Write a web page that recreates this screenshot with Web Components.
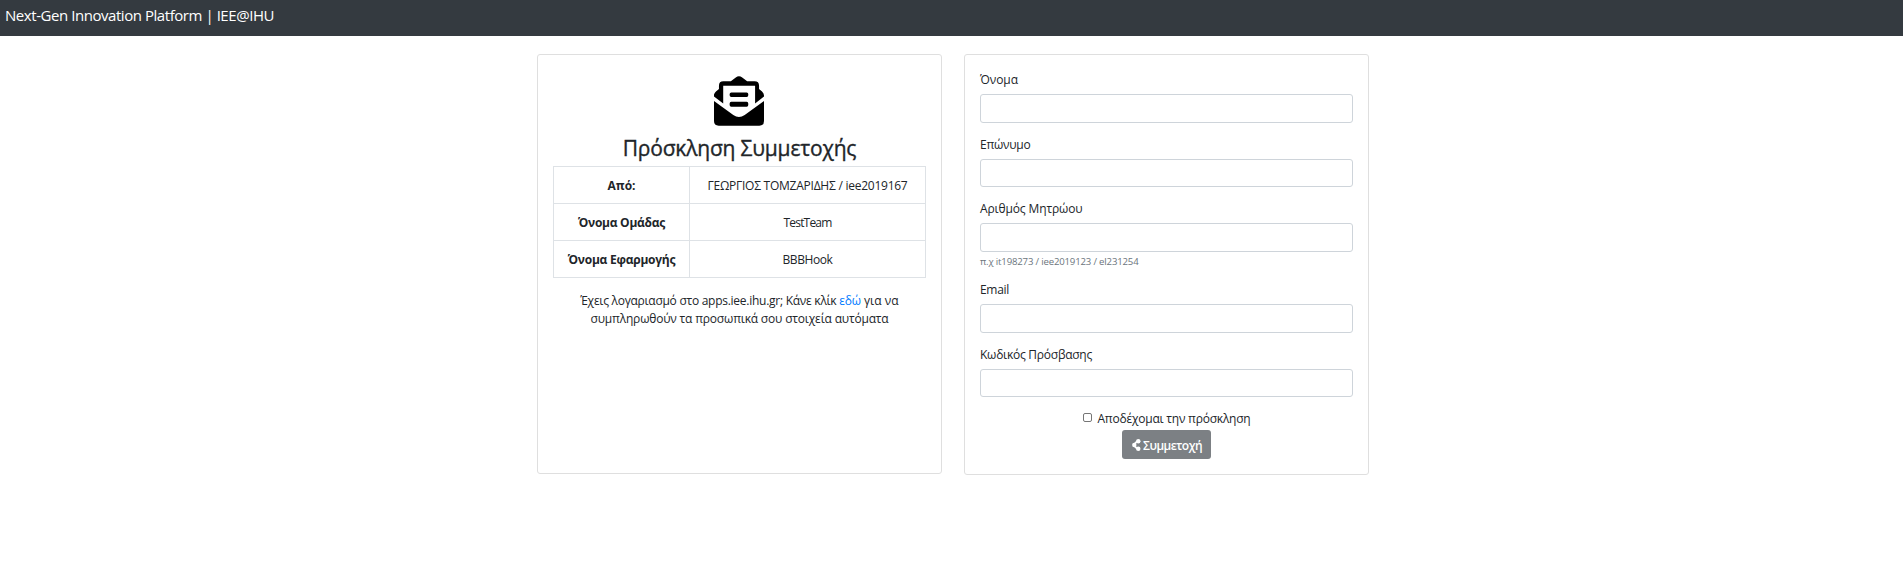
<!DOCTYPE html>
<html lang="el">
<head>
<meta charset="utf-8">
<title>Next-Gen Innovation Platform</title>
<style>
html{font-size:12px}
body{margin:0;background:#fff;color:#212529;font:400 12px/18px "Open Sans","Noto Sans",sans-serif}
</style>
</head>
<body>
<invite-page></invite-page>
<script>
const define = (name, html, setup) => customElements.define(name, class extends HTMLElement {
  connectedCallback() {
    if (!this.shadowRoot) {
      const t = document.createElement('template');
      t.innerHTML = html;
      this.attachShadow({mode: 'open'}).append(t.content.cloneNode(true));
    }
    if (setup) setup(this, this.shadowRoot);
  }
});

// Text run tracked to a given advance width
define('fit-text', `<style>:host{display:inline-block;white-space:pre}</style><slot></slot>`, el => {
  const w = parseFloat(el.getAttribute('w'));
  el.style.letterSpacing = '0px';
  const n = el.textContent.length;
  el.style.letterSpacing = ((w - el.getBoundingClientRect().width) / n).toFixed(4) + 'px';
});

define('nav-bar', `<style>
:host{display:flex;box-sizing:border-box;height:36px;padding:4px 5px;background:#343a40;color:#fff;font-size:15px;line-height:22px}
</style><slot></slot>`);

define('ui-card', `<style>
:host{display:block;box-sizing:border-box;width:405px;padding:15px;background:#fff;border:1px solid #dfdfdf;border-radius:3px}
</style><slot></slot>`);

define('mail-icon', `<style>:host{display:block;width:51px;height:50px}svg{display:block}</style>
<svg width="50" height="50" viewBox="0 0 50.500 50">
<path d="M0 18.500Q.5 17 2 15.500L5 13V9.500Q5 5 9.500 5H17L22 1.200Q25.200-1.200 28.500 1.200L33.500 5H41Q45.500 5 45.500 9.500V13L48.500 15.500Q50.500 17.300 50.500 19.500V20.500L41.500 27.500V9.500H9.300V27.500L0 20.500Z"/>
<path d="M0 25L19.500 39.200Q25.200 43 31 39.200L50.500 25V45.300Q50.500 50 45.800 50H4.700Q0 50 0 45.300Z"/>
<path d="M17.500 16.300H33Q34.600 16.300 34.600 18V19.200Q34.600 20.900 33 20.900H17.500Q15.800 20.900 15.800 19.200V18Q15.800 16.300 17.500 16.300ZM17.500 25.800H33Q34.600 25.800 34.600 27.500V29Q34.600 30.700 33 30.700H17.500Q15.800 30.700 15.800 29V27.500Q15.800 25.800 17.500 25.800Z"/>
</svg>`);

define('invite-table', `<style>
:host{display:grid;grid-template-columns:136px 236px;grid-auto-rows:37px;width:372px;border-bottom:1px solid #dee2e6;border-right:1px solid #dee2e6}
::slotted(*){box-sizing:border-box;border-top:1px solid #dee2e6;border-left:1px solid #dee2e6;padding:10px 0 7px;text-align:center}
::slotted(b){font-weight:700}
</style><slot></slot>`);

define('form-field', `<style>
:host{display:block;margin-bottom:12px}
label{display:block;box-sizing:border-box;padding-top:1px;margin-bottom:6px;height:18px}
input{display:block;box-sizing:border-box;width:100%;height:28.5px;margin:0;border:1px solid #ced4da;border-radius:3px;background:#fff;outline:0}
::slotted([slot=help]){display:block;padding-top:3px;height:13.5px;line-height:13.5px;font-size:9.6px;color:#6c757d}
</style><label><slot></slot></label><input><slot name="help"></slot>`);

define('accept-check', `<style>
:host{display:flex;justify-content:center;box-sizing:border-box;height:21px;padding-top:1px}
input{appearance:none;box-sizing:border-box;width:9px;height:9px;margin:3px 6px 0 0;border:1px solid #767676;border-radius:2px;background:#fff}
</style><input type="checkbox"><slot></slot>`);

define('join-button', `<style>
:host{display:flex;justify-content:center}
button{display:flex;align-items:center;box-sizing:border-box;width:89px;height:29px;margin:0;padding:2px 0 0 10px;border:0;border-radius:3px;background:#7c8084;color:#fff;font:600 12px/18px "Open Sans","Noto Sans",sans-serif}
svg{margin:0 2px 1px 0}
</style><button><svg width="9" height="12" viewBox="0 0 9 12" fill="#fff"><circle cx="6.300" cy="2.300" r="2.200"/><circle cx="2.300" cy="6" r="2.200"/><circle cx="6.300" cy="9.700" r="2.200"/><path d="M2.300 5.200L5.500 2M2.300 6.800L5.500 10" stroke="#fff" stroke-width="1.800"/></svg><slot></slot></button>`);

define('invite-page', `<style>
:host{display:block;min-height:576px;background:#fff}
main{display:flex;align-items:flex-start;justify-content:center;gap:22px;margin:18px 0 0 3px}
.invite{height:420px}
mail-icon{margin:6px auto 0}
h3{margin:10px 0 5px;font-size:21px;font-weight:500;line-height:25px;text-align:center;-webkit-text-stroke:.35px #212529}
p{margin:14px 0 0;text-align:center}
a{color:#007bff;text-decoration:none}
.lines{display:flex;flex-direction:column;align-items:center}
</style>
<nav-bar><fit-text w="269">Next-Gen Innovation Platform | IEE@IHU</fit-text></nav-bar>
<main>
<ui-card class="invite">
<mail-icon></mail-icon>
<h3><fit-text w="233.500">Πρόσκληση Συμμετοχής</fit-text></h3>
<invite-table>
<b><fit-text w="28">Από:</fit-text></b><span><fit-text w="200">ΓΕΩΡΓΙΟΣ ΤΟΜΖΑΡΙΔΗΣ / iee2019167</fit-text></span>
<b><fit-text w="87">Όνομα Ομάδας</fit-text></b><span><fit-text w="48">TestTeam</fit-text></span>
<b><fit-text w="107.500">Όνομα Εφαρμογής</fit-text></b><span><fit-text w="50">BBBHook</fit-text></span>
</invite-table>
<p class="lines"><span><fit-text w="259">Έχεις λογαριασμό στο apps.iee.ihu.gr; Κάνε κλίκ </fit-text><a href="#"><fit-text w="21.500">εδώ</fit-text></a><fit-text w="38"> για να</fit-text></span>
<fit-text w="298">συμπληρωθούν τα προσωπικά σου στοιχεία αυτόματα</fit-text></p>
</ui-card>
<ui-card>
<form-field><fit-text w="38">Όνομα</fit-text></form-field>
<form-field><fit-text w="50.5">Επώνυμο</fit-text></form-field>
<form-field><fit-text w="102.500">Αριθμός Μητρώου</fit-text><span slot="help"><fit-text w="158.500">π.χ it198273 / iee2019123 / el231254</fit-text></span></form-field>
<form-field><fit-text w="29">Email</fit-text></form-field>
<form-field><fit-text w="112">Κωδικός Πρόσβασης</fit-text></form-field>
<accept-check><fit-text w="153">Αποδέχομαι την πρόσκληση</fit-text></accept-check>
<join-button><fit-text w="59">Συμμετοχή</fit-text></join-button>
</ui-card>
</main>`);
</script>
</body>
</html>
